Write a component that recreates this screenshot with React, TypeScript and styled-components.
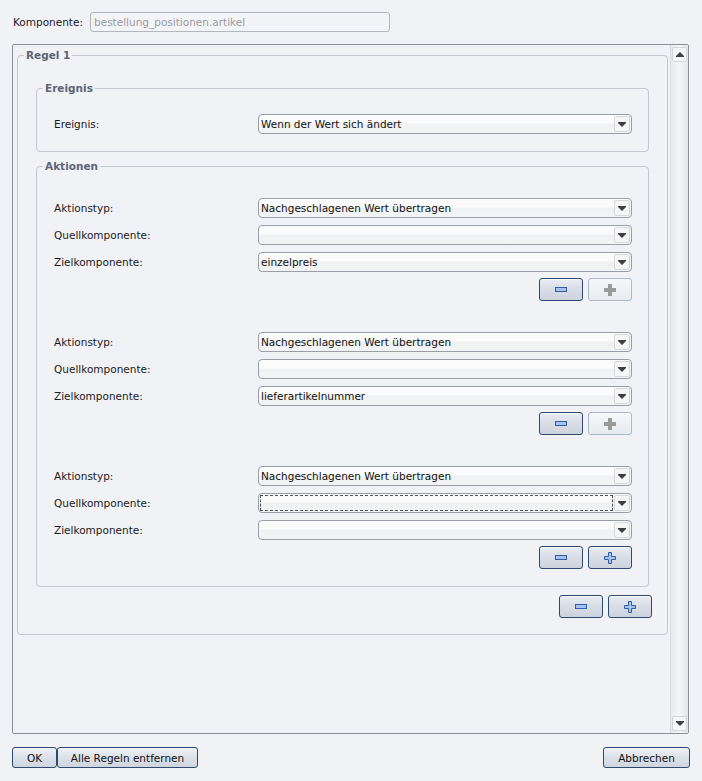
import React from 'react';
import styled, { createGlobalStyle } from 'styled-components';

const GlobalStyle = createGlobalStyle`
  html, body {
    margin: 0;
    padding: 0;
    background: #f1f2f6;
  }
  body {
    font-family: "DejaVu Sans", "Liberation Sans", sans-serif;
    font-size: 10.5px;
    color: #1b1b1b;
  }
`;

const Window = styled.div`
  width: 702px;
  height: 781px;
  display: flex;
  flex-direction: column;
  background: #f1f2f6;
  overflow: hidden;
`;

const TopRow = styled.div`
  display: flex;
  align-items: center;
  height: 20px;
  margin-top: 12px;
  padding-left: 13px;
`;

const TopLabel = styled.span`
  width: 77px;
`;

const TextField = styled.div`
  box-sizing: border-box;
  width: 300px;
  height: 20px;
  border: 1px solid #b2b6bd;
  border-radius: 3px;
  padding-left: 3px;
  line-height: 18px;
  color: #9a9ca2;
  background: #f3f4f7;
`;

const ScrollPane = styled.div`
  box-sizing: border-box;
  margin: 12px 13px 0 12px;
  height: 690px;
  border: 1px solid #8d9097;
  border-radius: 2px;
  display: flex;
`;

const Viewport = styled.div`
  flex: 1;
  padding: 10px 2px 0 4px;
`;

const ScrollBar = styled.div`
  width: 18px;
  display: flex;
  flex-direction: column;
  justify-content: space-between;
  align-items: center;
  padding: 2px 0 2px;
  box-sizing: border-box;
  background: linear-gradient(to right, #e9eaed, #f6f6f8 50%, #e4e5e8);
  border-left: 1px solid #d8dade;
`;

const ScrollArrow = styled.div`
  box-sizing: border-box;
  width: 15px;
  height: 15px;
  border: 1px solid #d2d5da;
  border-radius: 2px;
  background: #f5f6f8;
  display: flex;
  align-items: center;
  justify-content: center;
`;

const Box = styled.div<{ $bottom: number; $height?: number; $gap?: number }>`
  box-sizing: border-box;
  border: 1px solid #c4c7d0;
  border-radius: 4px;
  padding-bottom: ${p => p.$bottom}px;
  margin-top: ${p => p.$gap ?? 0}px;
  ${p => p.$height && `height: ${p.$height}px;`}
`;

const BoxTitle = styled.div`
  display: block;
  width: fit-content;
  height: 14px;
  margin: -8px 0 0 6px;
  padding: 0 2px;
  background: #f1f2f6;
  font-weight: bold;
  color: #5d6577;
  line-height: 14px;
`;

const BoxBody = styled.div<{ $top: number; $left: number; $right: number }>`
  margin-top: ${p => p.$top}px;
  padding: 0 ${p => p.$right}px 0 ${p => p.$left}px;
`;

const Row = styled.div`
  display: grid;
  grid-template-columns: 204px 1fr;
  align-items: center;
  height: 20px;
  & + & {
    margin-top: 7px;
  }
`;

const Label = styled.span`
  white-space: nowrap;
`;

const Combo = styled.div<{ $focus?: boolean }>`
  position: relative;
  box-sizing: border-box;
  height: 20px;
  border: 1px solid #9a9ea6;
  border-radius: 4px;
  background: linear-gradient(to bottom, #fbfbfb 0%, #fbfbfb 45%, #f0f1f2 50%, #f3f4f5 100%);
  display: flex;
  align-items: center;
  padding-left: 2px;
  color: #111;
  ${p => p.$focus && `
    &::after {
      content: '';
      position: absolute;
      inset: 1px 18px 1px 1px;
      border: 1px dashed #555;
    }
  `}
`;

const ComboText = styled.span`
  flex: 1;
  white-space: nowrap;
`;

const ComboArrow = styled.div`
  box-sizing: border-box;
  width: 16px;
  height: 16px;
  margin-right: 1px;
  border: 1px solid #d6d8dc;
  border-radius: 2px;
  background: #f6f6f7;
  display: flex;
  align-items: center;
  justify-content: center;
`;

const ButtonRow = styled.div<{ $top: number }>`
  display: flex;
  justify-content: flex-end;
  gap: 5px;
  margin-top: ${p => p.$top}px;
`;

const IconButton = styled.div<{ $disabled?: boolean }>`
  box-sizing: border-box;
  width: 44px;
  height: 23px;
  border: 1px solid ${p => (p.$disabled ? '#a9b8cc' : '#2e4b6f')};
  border-radius: 3px;
  background: ${p =>
    p.$disabled
      ? 'linear-gradient(to bottom, #f6f7f9, #e7eaee)'
      : 'linear-gradient(to bottom, #e9edf3 0%, #d9dee7 45%, #cdd3dd 100%)'};
  box-shadow: inset 0 1px 0 #f6f8fb;
  display: flex;
  align-items: center;
  justify-content: center;
`;

const Group = styled.div`
  & + & {
    margin-top: 31px;
  }
`;

const Footer = styled.div`
  display: flex;
  justify-content: space-between;
  margin: 13px 12px 0 12px;
`;

const FooterLeft = styled.div`
  display: flex;
`;

const DialogButton = styled.div<{ $w: number }>`
  box-sizing: border-box;
  width: ${p => p.$w}px;
  height: 21px;
  border: 1px solid #2e4b6f;
  border-radius: 3px;
  background: linear-gradient(to bottom, #eef1f5 0%, #dde2e9 50%, #cfd5de 100%);
  display: flex;
  align-items: center;
  justify-content: center;
  color: #111;
`;

const DownTriangle = () => (
  <svg width="8" height="5" viewBox="0 0 8 5">
    <path d="M0 0h8v1L4 5 0 1z" fill="#3f3f3f" />
  </svg>
);

const UpTriangle = () => (
  <svg width="8" height="5" viewBox="0 0 8 5">
    <path d="M0 5h8v-1L4 0 0 4z" fill="#3f3f3f" />
  </svg>
);

const MinusIcon = () => (
  <svg width="12" height="5" viewBox="0 0 12 5">
    <rect x="0.5" y="0.5" width="11" height="4" fill="#a6c2ec" stroke="#2f5fa6" />
  </svg>
);

const PlusIcon = ({ disabled }: { disabled?: boolean }) => (
  <svg width="12" height="12" viewBox="0 0 12 12">
    {disabled ? (
      <path d="M4 0h4v4h4v4H8v4H4V8H0V4h4z" fill="#9a9a9a" />
    ) : (
      <path d="M4.5 0.5h3v4h4v3h-4v4h-3v-4h-4v-3h4z" fill="#a6c2ec" stroke="#2f5fa6" />
    )}
  </svg>
);

interface Action {
  typ: string;
  quelle: string;
  ziel: string;
  focus?: boolean;
  last?: boolean;
}

const actions: Action[] = [
  { typ: 'Nachgeschlagenen Wert übertragen', quelle: '', ziel: 'einzelpreis' },
  { typ: 'Nachgeschlagenen Wert übertragen', quelle: '', ziel: 'lieferartikelnummer' },
  { typ: 'Nachgeschlagenen Wert übertragen', quelle: '', ziel: '', focus: true, last: true },
];

function ComboBox({ value, focus }: { value: string; focus?: boolean }) {
  return (
    <Combo $focus={focus}>
      <ComboText>{value}</ComboText>
      <ComboArrow>
        <DownTriangle />
      </ComboArrow>
    </Combo>
  );
}

export default function App() {
  return (
    <Window>
      <GlobalStyle />
      <TopRow>
        <TopLabel>Komponente:</TopLabel>
        <TextField>bestellung_positionen.artikel</TextField>
      </TopRow>

      <ScrollPane>
        <Viewport>
          <Box $bottom={16} $height={580}>
            <BoxTitle>Regel 1</BoxTitle>
            <BoxBody $top={26} $left={18} $right={15}>
              <Box $bottom={17} style={{ marginRight: 3 }}>
                <BoxTitle>Ereignis</BoxTitle>
                <BoxBody $top={19} $left={17} $right={16}>
                  <Row>
                    <Label>Ereignis:</Label>
                    <ComboBox value="Wenn der Wert sich ändert" />
                  </Row>
                </BoxBody>
              </Box>

              <Box $bottom={17} $gap={14} style={{ marginRight: 3 }}>
                <BoxTitle>Aktionen</BoxTitle>
                <BoxBody $top={25} $left={17} $right={16}>
                  {actions.map((a, i) => (
                    <Group key={i}>
                      <Row>
                        <Label>Aktionstyp:</Label>
                        <ComboBox value={a.typ} />
                      </Row>
                      <Row>
                        <Label>Quellkomponente:</Label>
                        <ComboBox value={a.quelle} focus={a.focus} />
                      </Row>
                      <Row>
                        <Label>Zielkomponente:</Label>
                        <ComboBox value={a.ziel} />
                      </Row>
                      <ButtonRow $top={6}>
                        <IconButton>
                          <MinusIcon />
                        </IconButton>
                        <IconButton $disabled={!a.last}>
                          <PlusIcon disabled={!a.last} />
                        </IconButton>
                      </ButtonRow>
                    </Group>
                  ))}
                </BoxBody>
              </Box>

              <ButtonRow $top={8}>
                <IconButton>
                  <MinusIcon />
                </IconButton>
                <IconButton>
                  <PlusIcon />
                </IconButton>
              </ButtonRow>
            </BoxBody>
          </Box>
        </Viewport>
        <ScrollBar>
          <ScrollArrow>
            <UpTriangle />
          </ScrollArrow>
          <ScrollArrow>
            <DownTriangle />
          </ScrollArrow>
        </ScrollBar>
      </ScrollPane>

      <Footer>
        <FooterLeft>
          <DialogButton $w={45}>OK</DialogButton>
          <DialogButton $w={141}>Alle Regeln entfernen</DialogButton>
        </FooterLeft>
        <DialogButton $w={87}>Abbrechen</DialogButton>
      </Footer>
    </Window>
  );
}
